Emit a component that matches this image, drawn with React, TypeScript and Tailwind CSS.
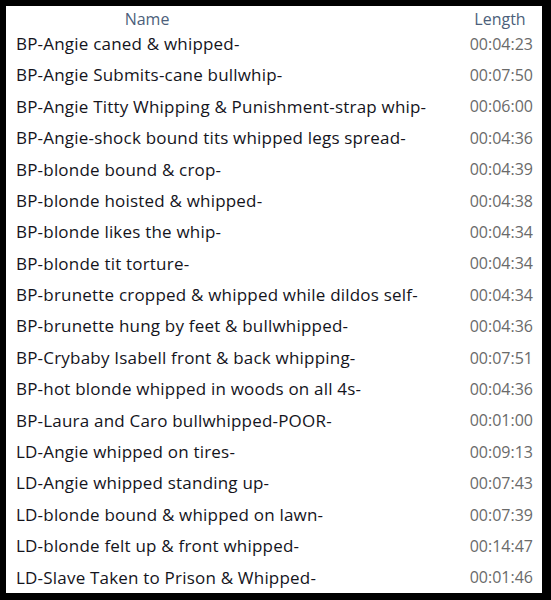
const rows: [string, string][] = [
  ["BP-Angie caned & whipped-", "00:04:23"],
  ["BP-Angie Submits-cane bullwhip-", "00:07:50"],
  ["BP-Angie Titty Whipping & Punishment-strap whip-", "00:06:00"],
  ["BP-Angie-shock bound tits whipped legs spread-", "00:04:36"],
  ["BP-blonde bound & crop-", "00:04:39"],
  ["BP-blonde hoisted & whipped-", "00:04:38"],
  ["BP-blonde likes the whip-", "00:04:34"],
  ["BP-blonde tit torture-", "00:04:34"],
  ["BP-brunette cropped & whipped while dildos self-", "00:04:34"],
  ["BP-brunette hung by feet & bullwhipped-", "00:04:36"],
  ["BP-Crybaby Isabell front & back whipping-", "00:07:51"],
  ["BP-hot blonde whipped in woods on all 4s-", "00:04:36"],
  ["BP-Laura and Caro bullwhipped-POOR-", "00:01:00"],
  ["LD-Angie whipped on tires-", "00:09:13"],
  ["LD-Angie whipped standing up-", "00:07:43"],
  ["LD-blonde bound & whipped on lawn-", "00:07:39"],
  ["LD-blonde felt up & front whipped-", "00:14:47"],
  ["LD-Slave Taken to Prison & Whipped-", "00:01:46"],
]

export default function App() {
  return (
    <div className="w-[551px] h-[600px] bg-black pt-[6px] pl-[6px] pr-[9px] pb-[7px] font-['Open_Sans',sans-serif]">
      <div className="flex h-full flex-col bg-white">
        <div className="flex h-[22px] items-center pt-[4px] text-[16px] text-[#4c5f7b]">
          <div className="w-[282px] text-center">Name</div>
          <div className="flex-1" />
          <div className="w-[84px] text-center">Length</div>
        </div>
        {rows.map(([name, len]) => (
          <div key={name} className="flex h-[31.4px] items-center">
            <div className="flex-1 pl-[10px] text-[17px] tracking-[0.2px] text-[#14141c] whitespace-nowrap">{name}</div>
            <div className="w-[84px] pr-[9px] text-right text-[16px] text-[#6a6a6a]">{len}</div>
          </div>
        ))}
      </div>
    </div>
  )
}
